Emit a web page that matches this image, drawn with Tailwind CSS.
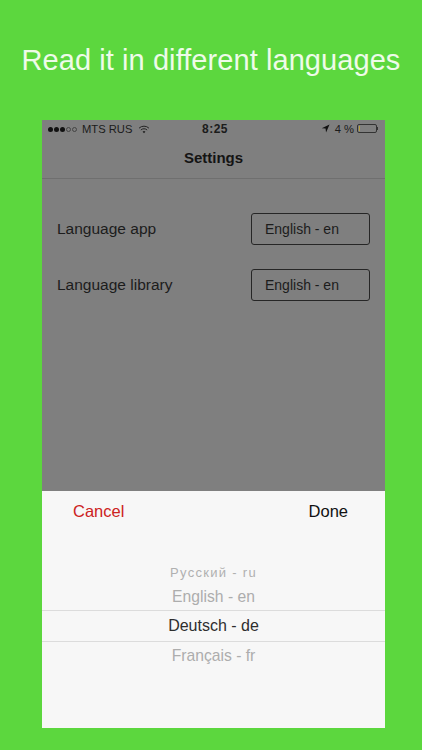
<!DOCTYPE html>
<html lang="en">
<head>
  <meta charset="UTF-8">
  <meta name="viewport" content="width=device-width,initial-scale=1.0">
  <title>Read it in different languages</title>
  <script src="https://cdn.jsdelivr.net/npm/@tailwindcss/browser@4"></script>
</head>
<body class="bg-[#5cd73e] font-['Liberation_Sans',sans-serif] overflow-hidden">
  <div class="w-[422px] h-[750px] flex flex-col">
    <h1 class="h-[120px] pt-[42px] text-center text-[29px] leading-[36px] tracking-[0.07px] font-normal text-[#eefbe9] whitespace-nowrap">Read it in different languages</h1>

    <div class="ml-[42px] w-[343px] h-[608px] flex flex-col">
      <!-- Dimmed settings screen -->
      <div class="h-[371px] bg-[#7f7f7f] flex flex-col">
        <!-- Status bar -->
        <div class="h-[18px] px-[3px] flex items-center text-[11.2px] text-[#1b1b1b] relative">
          <div class="flex items-center gap-[1px] ml-[3px]">
            <span class="w-[5px] h-[5px] rounded-full bg-[#111]"></span>
            <span class="w-[5px] h-[5px] rounded-full bg-[#111]"></span>
            <span class="w-[5px] h-[5px] rounded-full bg-[#111]"></span>
            <span class="w-[5px] h-[5px] rounded-full border border-[#444]"></span>
            <span class="w-[5px] h-[5px] rounded-full border border-[#444]"></span>
          </div>
          <span class="ml-[5px]">MTS RUS</span>
          <svg class="ml-[6px]" width="12" height="9" viewBox="0 0 13 10" fill="none" stroke="#222" stroke-width="1.1">
            <path d="M1 3.5a8 8 0 0 1 11 0"/>
            <path d="M3 5.6a5 5 0 0 1 7 0"/>
            <path d="M6.5 9.2 4.9 7.5a2.3 2.3 0 0 1 3.2 0z" fill="#222" stroke="none"/>
          </svg>
          <span class="absolute left-[160px] text-[12px] font-bold tracking-[0.5px]">8:25</span>
          <div class="ml-auto flex items-center">
            <svg width="9" height="9" viewBox="0 0 10 10"><path d="M9.5 .5 .8 4.6l4.3.4.5 4.4z" fill="#111"/></svg>
            <span class="ml-[5px]">4 %</span>
            <div class="ml-[3px] w-[20px] h-[9px] border border-[#333] rounded-[2px] p-[1px]">
              <div class="w-[1px] h-full bg-[#b9a23a]"></div>
            </div>
            <div class="w-[1px] h-[3px] bg-[#333] mr-[4px]"></div>
          </div>
        </div>

        <!-- Nav bar -->
        <div class="h-[41px] border-b border-[#6f6f6f] flex items-center justify-center text-[15px] font-bold text-[#141414]">Settings</div>

        <!-- Rows -->
        <div class="pt-[34px] pl-[15px] pr-[15px] flex flex-col gap-[24px] text-[15.5px] text-[#1c1c1c]">
          <div class="flex items-center justify-between">
            <span>Language app</span>
            <div class="w-[119px] h-[32px] pl-[13px] flex items-center border border-[#262626] rounded-[3px] text-[14px]">English - en</div>
          </div>
          <div class="flex items-center justify-between">
            <span>Language library</span>
            <div class="w-[119px] h-[32px] pl-[13px] flex items-center border border-[#262626] rounded-[3px] text-[14px]">English - en</div>
          </div>
        </div>
      </div>

      <!-- Picker sheet -->
      <div class="flex-1 bg-[#f7f7f7] flex flex-col">
        <div class="h-[41px] pl-[31px] pr-[37px] flex items-center justify-between text-[16.5px]">
          <span class="text-[#cc2222]">Cancel</span>
          <span class="text-[#111]">Done</span>
        </div>
        <div class="pt-[32px] flex flex-col items-center">
          <div class="h-[18px] flex items-center text-[13px] tracking-[1.3px] text-[#b0b0b0]">Русский - ru</div>
          <div class="h-[28px] pt-px w-full flex items-center justify-center text-[15.7px] text-[#adadad]">English - en</div>
          <div class="h-[32px] w-full flex items-center justify-center border-y border-[#dcdcdc] text-[16px] text-[#2e2e2e]">Deutsch - de</div>
          <div class="h-[27px] flex items-center text-[15.7px] text-[#adadad]">Français - fr</div>
        </div>
      </div>
    </div>
  </div>
</body>
</html>
